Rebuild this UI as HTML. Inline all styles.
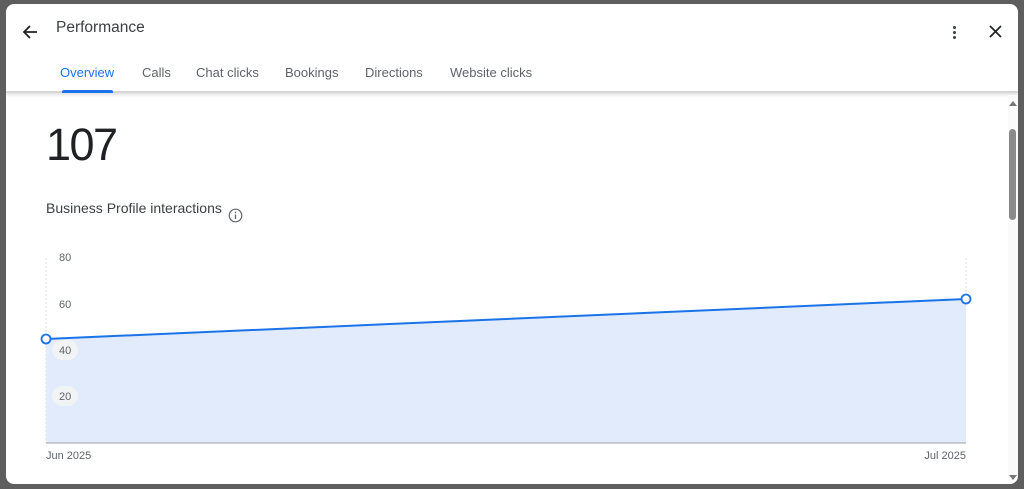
<!DOCTYPE html>
<html><head><meta charset="utf-8"><style>
*{margin:0;padding:0;box-sizing:border-box}
body{width:1024px;height:489px;background:#5e5e5e;position:relative;overflow:hidden;font-family:"Liberation Sans",Arial,sans-serif}
.dlg{position:absolute;left:6px;top:4px;width:1012px;height:480px;background:#fff;border-radius:8px;overflow:hidden}
.hdr{position:absolute;left:0;top:0;width:1012px;height:89px;border-bottom:2px solid #d6d6d6;box-shadow:0 2px 3px rgba(0,0,0,.12)}
.t{position:absolute;font-size:15.5px;color:#3c4043}
.tab{position:absolute;top:61px;font-size:13px;color:#5f6368}
.ul{position:absolute;left:56px;top:86px;width:51px;height:3px;background:#1a73e8;border-radius:2px 2px 0 0}
.sb{position:absolute;left:1002px;top:91px;width:10px;height:389px;background:#fafafa}
</style></head><body>
<div class="dlg">
<div class="hdr">
<svg style="position:absolute;left:15px;top:19px" width="18" height="18" viewBox="0 0 18 18"><path d="M16 9H3M9 3L3 9l6 6" stroke="#202124" stroke-width="1.8" fill="none"/></svg>
<div class="t" style="left:50px;top:15px">Performance</div>
<div style="position:absolute;left:947px;top:22px;width:3px;height:3px;border-radius:50%;background:#3c4043;box-shadow:0 5px 0 #3c4043,0 10px 0 #3c4043"></div>
<svg style="position:absolute;left:983px;top:21px" width="13" height="13" viewBox="0 0 13 13"><path d="M1 1L12 12M12 1L1 12" stroke="#202124" stroke-width="1.7"/></svg>
<div class="tab" style="left:54px;color:#1a73e8">Overview</div>
<div class="tab" style="left:136px">Calls</div>
<div class="tab" style="left:190px">Chat clicks</div>
<div class="tab" style="left:279px">Bookings</div>
<div class="tab" style="left:359px">Directions</div>
<div class="tab" style="left:444px">Website clicks</div>
<div class="ul"></div>
</div>
<div style="position:absolute;left:40px;top:115px;font-size:45px;color:#202124;letter-spacing:-1.5px">107</div>
<div style="position:absolute;left:40px;top:196px;font-size:14px;color:#3c4043">Business Profile interactions</div>
<svg style="position:absolute;left:222px;top:204px" width="15" height="15" viewBox="0 0 15 15"><circle cx="7.5" cy="7.5" r="6.3" stroke="#5f6368" stroke-width="1.2" fill="none"/><path d="M7.5 6.5v4.5" stroke="#5f6368" stroke-width="1.3"/><circle cx="7.5" cy="4.4" r=".8" fill="#5f6368"/></svg>
<svg style="position:absolute;left:0;top:0" width="1002" height="480">
<line x1="40" y1="254" x2="40" y2="439" stroke="#ddd" stroke-dasharray="2,2"/>
<line x1="960" y1="254" x2="960" y2="295" stroke="#ddd" stroke-dasharray="2,2"/>
<polygon points="40,335 960,295 960,439 40,439" fill="#e2ebfb"/>
<line x1="40" y1="439" x2="960" y2="439" stroke="#9aa0a6"/>
<line x1="40" y1="335" x2="960" y2="295" stroke="#1a73e8" stroke-width="2"/>
<rect x="46" y="336" width="26" height="20" rx="10" fill="#f1f3f4"/>
<rect x="46" y="382" width="26" height="20" rx="10" fill="#f1f3f4"/>
<g font-family="Liberation Sans,Arial,sans-serif" font-size="11" fill="#5f6368">
<text x="53" y="257">80</text><text x="53" y="304">60</text><text x="53" y="350">40</text><text x="53" y="396">20</text>
<text x="40" y="455">Jun 2025</text><text x="960" y="455" text-anchor="end">Jul 2025</text></g>
<circle cx="40" cy="335" r="4.5" fill="#fff" stroke="#1a73e8" stroke-width="1.8"/>
<circle cx="960" cy="295" r="4.5" fill="#fff" stroke="#1a73e8" stroke-width="1.8"/>
</svg>
<div class="sb"><div style="position:absolute;left:1px;top:6px;border:4px solid transparent;border-bottom:5px solid #777;border-top:0"></div>
<div style="position:absolute;left:1px;top:34px;width:7px;height:91px;background:#8a8a8a;border-radius:4px"></div>
<div style="position:absolute;left:1px;top:380px;border:4px solid transparent;border-top:5px solid #777;border-bottom:0"></div></div>
</div>
</body></html>
